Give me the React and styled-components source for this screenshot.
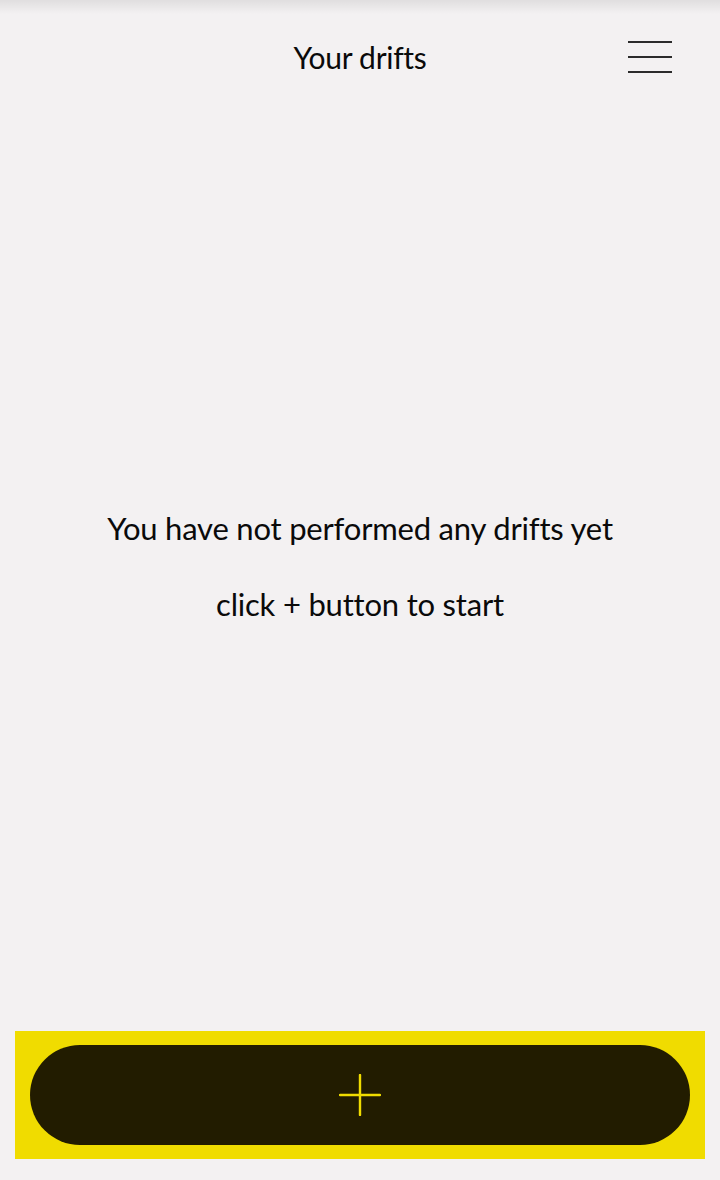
import React from "react";
import styled, { createGlobalStyle } from "styled-components";

const Global = createGlobalStyle`
  html, body { margin: 0; padding: 0; background: #f3f1f2; }
  body { font-family: Lato, "Open Sans", sans-serif; color: #0a0a0a; }
`;

const Page = styled.div`
  position: relative;
  width: 720px;
  height: 1180px;
  display: flex;
  flex-direction: column;
  background: #f3f1f2;
  overflow: hidden;
  &::before {
    content: "";
    position: absolute;
    left: 0; right: 0; top: 0;
    height: 14px;
    background: linear-gradient(to bottom, rgba(0,0,0,0.08), rgba(0,0,0,0));
  }
`;

const Header = styled.header`
  height: 100px;
  display: grid;
  grid-template-columns: 1fr auto 1fr;
  align-items: center;
  padding: 0 48px;
  box-sizing: border-box;
`;

const Title = styled.h1`
  grid-column: 2;
  margin: 0;
  font-size: 30px;
  font-weight: 400;
  letter-spacing: -0.3px;
  padding-top: 14px;
`;

const MenuButton = styled.button`
  grid-column: 3;
  justify-self: end;
  width: 44px;
  height: 32px;
  padding: 0;
  border: none;
  background: none;
  display: flex;
  flex-direction: column;
  justify-content: space-between;
  margin-top: 13px;
`;

const Bar = styled.span`
  display: block;
  height: 2px;
  width: 100%;
  background: #2b2b2b;
`;

const Main = styled.main`
  flex: 1;
  display: flex;
  flex-direction: column;
  align-items: center;
  justify-content: center;
  gap: 40px;
`;

const Message = styled.p`
  margin: 0;
  font-size: 31px;
  line-height: 36px;
  font-weight: 400;
  letter-spacing: -0.2px;
`;

const Footer = styled.div`
  margin: 0 15px 21px;
  padding: 14px 15px;
  background: #f0dc00;
`;

const AddButton = styled.button`
  width: 100%;
  height: 100px;
  border: none;
  border-radius: 50px;
  background: #221c00;
  display: flex;
  align-items: center;
  justify-content: center;
  padding: 0;
`;

export default function App() {
  return (
    <>
      <Global />
      <Page>
        <Header>
          <Title>Your drifts</Title>
          <MenuButton aria-label="menu">
            <Bar />
            <Bar />
            <Bar />
          </MenuButton>
        </Header>
        <Main>
          <Message>You have not performed any drifts yet</Message>
          <Message>click + button to start</Message>
        </Main>
        <Footer>
          <AddButton aria-label="add">
            <svg width="42" height="42" viewBox="0 0 42 42" fill="none" stroke="#f0dc00" strokeWidth="2.4" strokeLinecap="round">
              <path d="M21 1v40M1 21h40" />
            </svg>
          </AddButton>
        </Footer>
      </Page>
    </>
  );
}
